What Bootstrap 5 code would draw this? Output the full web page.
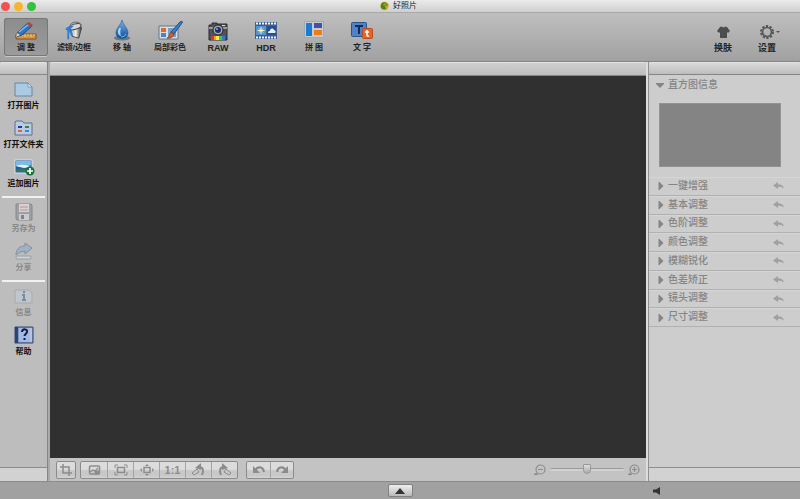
<!DOCTYPE html>
<html lang="zh-CN">
<head>
<meta charset="utf-8">
<meta name="viewport" content="width=device-width, initial-scale=1">
<title>好照片</title>
<link rel="stylesheet" href="https://cdn.jsdelivr.net/npm/bootstrap@5.3.0/dist/css/bootstrap.min.css">
<style>
body{font-family:"Liberation Sans","Noto Sans CJK SC",sans-serif;font-size:8px;line-height:10px;color:#222;background:#a0a0a0}
button{border:0;background:none;padding:0;color:inherit;line-height:10px}
svg{display:block;flex:none}
.titlebar{height:13px;background:linear-gradient(#ebebeb,#cfcfcf);border-bottom:1px solid #aaa;display:grid;grid-template-columns:1fr auto 1fr;padding:0 4px 0 1px}
.titlebar h1{font-size:8px;line-height:12px}
.light{width:9px;height:9px;border-radius:50%}
.toolbar{height:49px;padding:5px 11px 5px 4px;background:linear-gradient(#bfbfbf,#a1a1a1);border-bottom:1px solid #858585}
.tool{width:44px;border-radius:3px;font-weight:700;font-size:8px;white-space:nowrap;padding-bottom:3px;gap:2px}
.tool.wide{font-size:9px}
.tool.active{background:linear-gradient(#8c8c8c,#9c9c9c);box-shadow:inset 0 0 0 1px #777,0 1px 0 #c8c8c8}
.workspace{display:grid;grid-template-columns:48px minmax(0,1fr) 152px;background:#777}
.side{background:#bdbdbd;border-right:1px solid #858585}
.strip{height:13px;background:linear-gradient(#d9d9d9,#bebebe);border-top:1px solid #e4e4e4;border-bottom:1px solid #858585;border-radius:2px 2px 0 0}
.strip.head{margin-bottom:2px}
.strip.foot{height:14px;background:#d2d2d2;border-top:1px solid #8c8c8c;border-bottom:0;border-radius:0}
.side-item{height:39px;font-weight:600;white-space:nowrap;padding-top:1px;gap:2px;color:#111}
.side-item:disabled{color:#888}
.side-item:disabled svg{opacity:.45}
.rule{height:2px;margin:2px;background:#f1f1f1}
.middle{background:#c3c3c3;border-left:2px solid #aaa;border-right:2px solid #ddd}
.middle .strip{background:linear-gradient(#cfcfcf,#bebebe);height:14px}
.canvas{background:#303030}
.controls{height:23px;padding:0 6px 0 6px;color:#8c8c8c}
.pack{height:18px;border:1px solid #8b8b8b;border-radius:2px;background:linear-gradient(#dcdcdc 0 45%,#c8c8c8 55% 85%,#d4d4d4);overflow:hidden}
.pack button{width:26px}
.pack.single button{width:18px}
.pack.double button{width:23px}
.pack button+button{border-left:1px solid #a4a4a4}
.ratio{font:700 11px/14px "Liberation Sans",sans-serif}
.zoomer{appearance:none;width:74px;height:12px;background:transparent}
.zoomer::-webkit-slider-runnable-track{height:3px;background:#d2d2d2;border-top:1px solid #999;border-radius:2px}
.zoomer::-webkit-slider-thumb{appearance:none;width:8px;height:10px;margin-top:-5px;border:1px solid #999;background:linear-gradient(#dedede,#aaa);border-radius:1px 1px 4px 4px}
.inspector{background:#cdcdcd;border-left:1px solid #909090;color:#858585;font-size:10px}
.inspector button{font-weight:500;line-height:14px}
.inspector svg{margin-top:1px}
.caption-row{height:26px;padding-left:7px;padding-bottom:10px}
.histogram{height:64px;margin:0 19px 10px 10px;background:#848484;border:1px solid #929292}
.sections{display:grid;grid-auto-rows:1fr;height:150px}
.section-row{padding:0 15px 0 9px;border-bottom:1px solid #b1b1b1;box-shadow:inset 0 1px 0 #d5d5d5}
.status{height:18px;display:grid;grid-template-columns:1fr auto 1fr;background:#a1a1a1;border-top:1px solid #8b8b8b}
.expand{width:25px;height:13px;border:1px solid #808080;border-radius:2px;background:linear-gradient(#eee,#bbb)}
.speaker{margin-left:240px}
</style>
<script src="https://cdn.jsdelivr.net/npm/bootstrap@5.3.0/dist/js/bootstrap.bundle.min.js"></script>
</head>
<body class="vh-100 d-flex flex-column overflow-hidden">
<svg width="0" height="0" class="position-absolute" aria-hidden="true">
<defs>
<linearGradient id="blue" x2="0" y2="1"><stop stop-color="#73b5ed"/><stop offset="1" stop-color="#164d9d"/></linearGradient>
<linearGradient id="metal"><stop stop-color="#555"/><stop offset=".5" stop-color="#eee"/><stop offset="1" stop-color="#333"/></linearGradient>
<symbol id="reply" viewBox="0 0 12 8"><path d="M0 3.500 5 0v2.200c3 0 5.500 1.200 6 4.300C9.500 5 7.500 4.600 5 4.700V7z" fill="#a0a0a0"/></symbol>
<symbol id="right" viewBox="0 0 5 8"><path d="M0 0h1l4 4-4 4H0z" fill="#858585"/></symbol>
</defs>
</svg>

<header class="titlebar align-items-center flex-shrink-0">
  <div class="d-flex gap-1"><span class="light" style="background:#f25350"></span><span class="light" style="background:#f6b530"></span><span class="light" style="background:#34c13b"></span></div>
  <div class="d-flex align-items-center gap-1"><svg width="9" height="10" viewBox="0 0 9 10"><circle cx="4.500" cy="5" r="4.200" fill="#d3a51c"/><path d="M1 4C2 0 7 1 8 4L5 5l1 3C2 9 0 7 1 4" fill="#52831d"/><path d="M3 3l3-1 1 1-3 2z" fill="#78b52a"/></svg><h1 class="m-0 fw-normal">好照片</h1></div>
  <span></span>
</header>

<nav class="toolbar d-flex justify-content-between flex-shrink-0" aria-label="工具">
  <div class="d-flex gap-1">
    <button class="tool active d-flex flex-column align-items-center justify-content-end" type="button"><svg width="22" height="19" viewBox="0 0 22 19"><path d="M1 12h20v5H1z" fill="#d3964b" stroke="#885019"/><path d="M4 12v3m3-3v2m3-2v3m3-3v2m3-2v3m3-3v2" stroke="#f1cf8e"/><path d="M1 15l2-5L13 1l4 3L7 13z" fill="#2977c8" stroke="#204d7d"/><path d="M4 10 14 2" stroke="#87c0ef" stroke-width="1.500"/><path d="M12 2l2-2 4 3-2 2z" fill="#c73f32"/><path d="M1 15l1-4 3 2z" fill="#efd5af"/></svg><span>调 整</span></button>
    <button class="tool d-flex flex-column align-items-center justify-content-end" type="button"><svg width="20" height="20" viewBox="0 0 20 21"><path d="M5 6l3 10 7 2 3-11z" fill="url(#metal)" stroke="#444"/><path d="M8 8l2 8m2-9v10" stroke="#f4f4f4" opacity=".6"/><ellipse cx="11" cy="6" rx="6.500" ry="2.800" transform="rotate(-16 11 6)" fill="#d5d5d5" stroke="#444"/><path d="M6 4c3-4 10-4 12 1" fill="none" stroke="#666"/><path d="M10 5C5 5 1 7 1 9l2 1v8c0 2 2 2 2 0v-7l2 4c2 2 2-1 1-3L6 9z" fill="#2d7edb"/></svg><span>滤镜/边框</span></button>
    <button class="tool d-flex flex-column align-items-center justify-content-end" type="button"><svg width="18" height="21" viewBox="0 0 18 21"><ellipse cx="9" cy="18" rx="8" ry="2.500" fill="#47606b" opacity=".7"/><path d="M9 0c1 5 6 8 6 13 0 7-12 7-12 0C3 8 8 5 9 0z" fill="url(#blue)" stroke="#164987" stroke-width=".5"/><path d="M6 8c-2 4-1 7 2 8-1-3-1-5 0-8z" fill="#9bdbfa"/><path d="M8 17q4 0 5-3" fill="none" stroke="#54caff"/></svg><span>移 轴</span></button>
    <button class="tool d-flex flex-column align-items-center justify-content-end" type="button"><svg width="25" height="20" viewBox="0 0 25 20"><path d="M1 5h19v13H1z" fill="#d7dde7" stroke="#65758c"/><path d="M3 7h5v4H3z" fill="#e46724"/><path d="M3 12h5v4H3z" fill="#4c83be"/><path d="M10 7h8v9h-8z" fill="#789dc3"/><path d="M13 11 22 1q3-2 2 1l-8 11z" fill="#3383ca" stroke="#214d7d"/><path d="M13 11l3 2c0 3-4 5-7 4 3-1 2-4 4-6" fill="#d25b2b" stroke="#71351e" stroke-width=".6"/></svg><span>局部彩色</span></button>
    <button class="tool wide d-flex flex-column align-items-center justify-content-end" type="button"><svg width="20" height="19" viewBox="0 0 20 19"><path d="M1 3h3V1h5v1h10v16H1z" fill="#505358" stroke="#292b30"/><path d="M1 5h18v2H1z" fill="#999ca1"/><circle cx="10" cy="8" r="5" fill="#aaa" stroke="#222"/><circle cx="10" cy="8" r="3" fill="#202c72"/><circle cx="9" cy="7" r="1" fill="#84a5ee"/><path d="M3 14h3v4H3z" fill="#df3333"/><path d="M6 14h2v4H6z" fill="#ff932b"/><path d="M8 14h3v4H8z" fill="#fff13a"/><path d="M11 14h3v4h-3z" fill="#41c64a"/><path d="M14 14h3v4h-3z" fill="#3872dc"/><path d="M14 3h3v1h-3z" fill="#ddd"/></svg><span>RAW</span></button>
    <button class="tool wide d-flex flex-column align-items-center justify-content-end" type="button"><svg width="22" height="19" viewBox="0 0 22 19"><path d="M0 0h22v17H0z" fill="#405f91"/><path d="M1 1.500h20m-20 14h20" stroke="#f1f6ff" stroke-width="2" stroke-dasharray="2 1"/><path d="M1 4h10v9H1z" fill="#4d95d5"/><path d="M12 4h9v9h-9z" fill="#254e93"/><path d="M6 5v7M2.500 8.500h7M4 6.500l4 4m0-4-4 4" stroke="#fff2b1"/><path d="M13 11c0-2 1-2 2-2 0-3 3-3 4-1 2 0 2 3 1 3z" fill="#e6efff"/></svg><span>HDR</span></button>
    <button class="tool d-flex flex-column align-items-center justify-content-end" type="button"><svg width="20" height="20" viewBox="0 0 20 20"><path d="M.5.5h19v16H.5z" fill="#c5cbd2" stroke="#a1a8b0"/><path d="M2 2h6v13H2z" fill="#1d7bce"/><path d="M10 2h8v5h-8z" fill="#474ca5"/><path d="M10 9h8v5h-8z" fill="#ef7b19"/></svg><span>拼 图</span></button>
    <button class="tool d-flex flex-column align-items-center justify-content-end" type="button"><svg width="22" height="19" viewBox="0 0 22 19"><rect x=".5" y=".5" width="15" height="14" rx="1" fill="#5182c5" stroke="#28558e"/><path d="M4 4h8M8 4v8" stroke="#182958" stroke-width="2"/><rect x="11.500" y="6.500" width="10" height="10" rx="1" fill="#e3662a" stroke="#b94c1d"/><path d="M16 8v5q0 1.500 2 1M14 10h4" fill="none" stroke="#fff" stroke-width="1.500"/></svg><span>文 字</span></button>
  </div>
  <div class="d-flex">
    <button class="tool wide d-flex flex-column align-items-center justify-content-end" type="button"><svg width="13" height="15" viewBox="0 0 13 15"><path d="M3 1l2-.5q1.500 2 3 0L10 1l3 4-2 2-1-1v6H3V6L2 7 0 5z" fill="#4d4d51"/></svg><span>换肤</span></button>
    <button class="tool wide d-flex flex-column align-items-center justify-content-end" type="button"><svg width="26" height="17" viewBox="-6 0 26 17"><circle cx="7" cy="8" r="4.500" fill="none" stroke="#56565a" stroke-width="1.700"/><circle cx="7" cy="8" r="6" fill="none" stroke="#56565a" stroke-width="2" stroke-dasharray="2.300 1.470"/><path d="M16 7h4l-2 2z" fill="#555"/></svg><span>设置</span></button>
  </div>
</nav>

<main class="workspace flex-grow-1">
  <aside class="side d-flex flex-column">
    <div class="strip head"></div>
    <button class="side-item d-flex flex-column align-items-center" type="button"><svg width="20" height="21" viewBox="0 0 20 21"><path d="M1 5h13l4 4v9H1z" fill="#aacbe3" stroke="#6686a0"/><path d="M14 5v4h4z" fill="#e4f0f6" stroke="#6686a0" stroke-width=".7"/></svg><span>打开图片</span></button>
    <button class="side-item d-flex flex-column align-items-center" type="button"><svg width="20" height="21" viewBox="0 0 20 21"><path d="M1 18V5l1-1h6l2 2h8v12z" fill="#bacbe4" stroke="#5c6f90"/><path d="M4 9h4v2H4z" fill="#2338a3"/><path d="M11 9h4v2h-4z" fill="#36833f"/><path d="M4 13h4v2H4z" fill="#df653e"/><path d="M11 13h4v2h-4z" fill="#3488cf"/></svg><span>打开文件夹</span></button>
    <button class="side-item d-flex flex-column align-items-center" type="button"><svg width="22" height="21" viewBox="0 0 22 21"><path d="M2 4h17v13H2z" fill="#235da3" stroke="#dce4eb"/><path d="M3 5h15v4q-7 4-15 1z" fill="#79bce7"/><path d="M3 10q7-3 15 1l-7 1z" fill="#e7f2f5"/><path d="M3 14q6-3 15 0v2H3z" fill="#3e7551"/><circle cx="17" cy="15" r="4.500" fill="#16713b"/><path d="M17 12v6m-3-3h6" stroke="#fff" stroke-width="1.700"/></svg><span>追加图片</span></button>
    <div class="rule"></div>
    <button class="side-item d-flex flex-column align-items-center" type="button" disabled><svg width="20" height="21" viewBox="0 0 20 21"><path d="M2 3h15l1 1v15H3l-1-1z" fill="#777b85" stroke="#484b55"/><path d="M5 3h10v8H5z" fill="#eee"/><path d="M6 6h8M6 9h8" stroke="#c0644d"/><path d="M5 13h10v6H5z" fill="#dadde3"/><path d="M7 14h3v4H7z" fill="#353b48"/></svg><span>另存为</span></button>
    <button class="side-item d-flex flex-column align-items-center" type="button" disabled><svg width="20" height="21" viewBox="0 0 20 21"><path d="M2 15c0-6 4-9 9-9V3l7 5-7 6v-3q-5 0-9 4z" fill="#7ea5ce" stroke="#365a82"/><rect x="2" y="16" width="15" height="3" rx="1" fill="#eee" stroke="#65758a"/></svg><span>分享</span></button>
    <div class="rule"></div>
    <button class="side-item d-flex flex-column align-items-center" type="button" disabled><svg width="20" height="21" viewBox="0 0 20 21"><path d="M1 5h14l3 3v10H1z" fill="#c5d1dc" stroke="#8797a6"/><path d="M8 10h2v5m-2 0h4" fill="none" stroke="#31547c" stroke-width="2"/><circle cx="10" cy="7" r="1.200" fill="#31547c"/></svg><span>信息</span></button>
    <button class="side-item d-flex flex-column align-items-center" type="button"><svg width="20" height="21" viewBox="0 0 20 21"><path d="M1 3h18v16H1z" fill="#8295bd" stroke="#374a75"/><path d="M1 3h3v16H1z" fill="#274579"/><path d="M5 4h11v14H5z" fill="#a3b9e7"/><path d="M17 4v14" stroke="#eef2fb"/><path d="M8 8c0-4 6-3 5 0-.5 2-2.500 2-2.500 4" fill="none" stroke="#171c33" stroke-width="2"/><path d="M9.500 14h2v2h-2z" fill="#171c33"/></svg><span class="fw-bold">帮助</span></button>
    <div class="strip foot mt-auto"></div>
  </aside>

  <section class="middle d-flex flex-column" aria-label="图片">
    <div class="strip"></div>
    <div class="canvas flex-grow-1"></div>
    <div class="controls d-flex align-items-center justify-content-between">
      <div class="d-flex align-items-center">
        <div class="pack single d-flex me-1"><button type="button" aria-label="裁剪" class="d-flex align-items-center justify-content-center"><svg width="14" height="14" viewBox="0 0 14 14" fill="none" stroke="currentColor" stroke-width="1.500"><path d="M4 1v9h9M1 4h9v9"/></svg></button></div>
        <div class="pack d-flex me-2">
          <button type="button" aria-label="对比" class="d-flex align-items-center justify-content-center"><svg width="13" height="12" viewBox="0 0 13 12" fill="none" stroke="currentColor"><rect x="1.500" y="2" width="10" height="8" rx="1" stroke-width="1.500"/><path d="M2 8l3-2 2 1 3-3" stroke-width="1.200"/><path d="M7 7h4v3H7z" fill="currentColor"/></svg></button>
          <button type="button" aria-label="适合窗口" class="d-flex align-items-center justify-content-center"><svg width="14" height="12" viewBox="0 0 14 12" fill="none" stroke="currentColor"><path d="M1 4V1h3m6 0h3v3M1 8v3h3m6 0h3V8"/><rect x="3.500" y="3.500" width="7" height="5" stroke-width="1.500"/></svg></button>
          <button type="button" aria-label="放大到窗口" class="d-flex align-items-center justify-content-center"><svg width="14" height="12" viewBox="0 0 14 12"><rect x="4" y="3.500" width="6" height="5" fill="none" stroke="currentColor" stroke-width="1.500"/><path d="M5 2h4L7 0zM5 10h4l-2 2zM2 4v4L0 6zM12 4v4l2-2z" fill="currentColor"/></svg></button>
          <button type="button" class="ratio">1:1</button>
          <button type="button" aria-label="向左旋转" class="d-flex align-items-center justify-content-center"><svg width="15" height="13" viewBox="0 0 15 13" fill="none" stroke="currentColor"><path d="M1 10l5-4 2 3-5 3z"/><path d="M8 4c4 0 5 3 3 8" stroke-width="2"/><path d="M4 5l6-5v7z" fill="currentColor" stroke="none"/></svg></button>
          <button type="button" aria-label="向右旋转" class="d-flex align-items-center justify-content-center"><svg width="15" height="13" viewBox="0 0 15 13" fill="none" stroke="currentColor"><path d="M14 10L9 6 7 9l5 3z"/><path d="M7 4C3 4 2 7 4 12" stroke-width="2"/><path d="M11 5L5 0v7z" fill="currentColor" stroke="none"/></svg></button>
        </div>
        <div class="pack double d-flex"><button type="button" aria-label="撤销" class="d-flex align-items-center justify-content-center"><svg width="14" height="11" viewBox="0 0 14 11"><path d="M3 7c2-5 8-5 9 1" fill="none" stroke="currentColor" stroke-width="2.200"/><path d="M1 2v7h7z" fill="currentColor"/></svg></button><button type="button" aria-label="重做" class="d-flex align-items-center justify-content-center"><svg width="14" height="11" viewBox="0 0 14 11"><path d="M11 7C9 2 3 2 2 8" fill="none" stroke="currentColor" stroke-width="2.200"/><path d="M13 2v7H6z" fill="currentColor"/></svg></button></div>
      </div>
      <div class="d-flex align-items-center gap-1">
        <button type="button" aria-label="缩小"><svg width="12" height="12" viewBox="0 0 12 12" fill="none" stroke="currentColor" stroke-width="1.200"><circle cx="6.500" cy="5.500" r="4.500"/><path d="M4 5.500h5M3 9l-2.500 1.500H4"/></svg></button>
        <input class="zoomer m-0" type="range" aria-label="缩放" value="50">
        <button type="button" aria-label="放大"><svg width="12" height="12" viewBox="0 0 12 12" fill="none" stroke="currentColor" stroke-width="1.200"><circle cx="6.500" cy="5.500" r="4.500"/><path d="M4 5.500h5M6.500 3v5M3 9l-2.500 1.500H4"/></svg></button>
      </div>
    </div>
  </section>

  <aside class="inspector d-flex flex-column">
    <div class="strip head"></div>
    <button type="button" class="caption-row d-flex align-items-center gap-1"><svg width="8" height="5" viewBox="0 0 8 5"><path d="M0 0h8v1L4 5 0 1z" fill="#858585"/></svg><span>直方图信息</span></button>
    <div class="histogram"></div>
    <div class="sections">
      <div class="section-row d-flex align-items-center justify-content-between"><button type="button" class="d-flex align-items-center gap-1"><svg width="6" height="8"><use href="#right"/></svg><span>一键增强</span></button><button type="button" aria-label="重置一键增强"><svg width="12" height="8"><use href="#reply"/></svg></button></div>
      <div class="section-row d-flex align-items-center justify-content-between"><button type="button" class="d-flex align-items-center gap-1"><svg width="6" height="8"><use href="#right"/></svg><span>基本调整</span></button><button type="button" aria-label="重置基本调整"><svg width="12" height="8"><use href="#reply"/></svg></button></div>
      <div class="section-row d-flex align-items-center justify-content-between"><button type="button" class="d-flex align-items-center gap-1"><svg width="6" height="8"><use href="#right"/></svg><span>色阶调整</span></button><button type="button" aria-label="重置色阶调整"><svg width="12" height="8"><use href="#reply"/></svg></button></div>
      <div class="section-row d-flex align-items-center justify-content-between"><button type="button" class="d-flex align-items-center gap-1"><svg width="6" height="8"><use href="#right"/></svg><span>颜色调整</span></button><button type="button" aria-label="重置颜色调整"><svg width="12" height="8"><use href="#reply"/></svg></button></div>
      <div class="section-row d-flex align-items-center justify-content-between"><button type="button" class="d-flex align-items-center gap-1"><svg width="6" height="8"><use href="#right"/></svg><span>模糊锐化</span></button><button type="button" aria-label="重置模糊锐化"><svg width="12" height="8"><use href="#reply"/></svg></button></div>
      <div class="section-row d-flex align-items-center justify-content-between"><button type="button" class="d-flex align-items-center gap-1"><svg width="6" height="8"><use href="#right"/></svg><span>色差矫正</span></button><button type="button" aria-label="重置色差矫正"><svg width="12" height="8"><use href="#reply"/></svg></button></div>
      <div class="section-row d-flex align-items-center justify-content-between"><button type="button" class="d-flex align-items-center gap-1"><svg width="6" height="8"><use href="#right"/></svg><span>镜头调整</span></button><button type="button" aria-label="重置镜头调整"><svg width="12" height="8"><use href="#reply"/></svg></button></div>
      <div class="section-row d-flex align-items-center justify-content-between"><button type="button" class="d-flex align-items-center gap-1"><svg width="6" height="8"><use href="#right"/></svg><span>尺寸调整</span></button><button type="button" aria-label="重置尺寸调整"><svg width="12" height="8"><use href="#reply"/></svg></button></div>
    </div>
    <div class="strip foot mt-auto"></div>
  </aside>
</main>

<footer class="status align-items-center flex-shrink-0">
  <span></span>
  <button type="button" class="expand d-flex align-items-center justify-content-center" aria-label="展开"><svg width="10" height="6" viewBox="0 0 10 6"><path d="M0 6l5-6 5 6z" fill="#333"/></svg></button>
  <button type="button" class="speaker text-start" aria-label="声音"><svg width="8" height="8" viewBox="0 0 8 8"><path d="M0 2.500h3L7 0v8L3 5.500H0z" fill="#333"/></svg></button>
</footer>
</body>
</html>
